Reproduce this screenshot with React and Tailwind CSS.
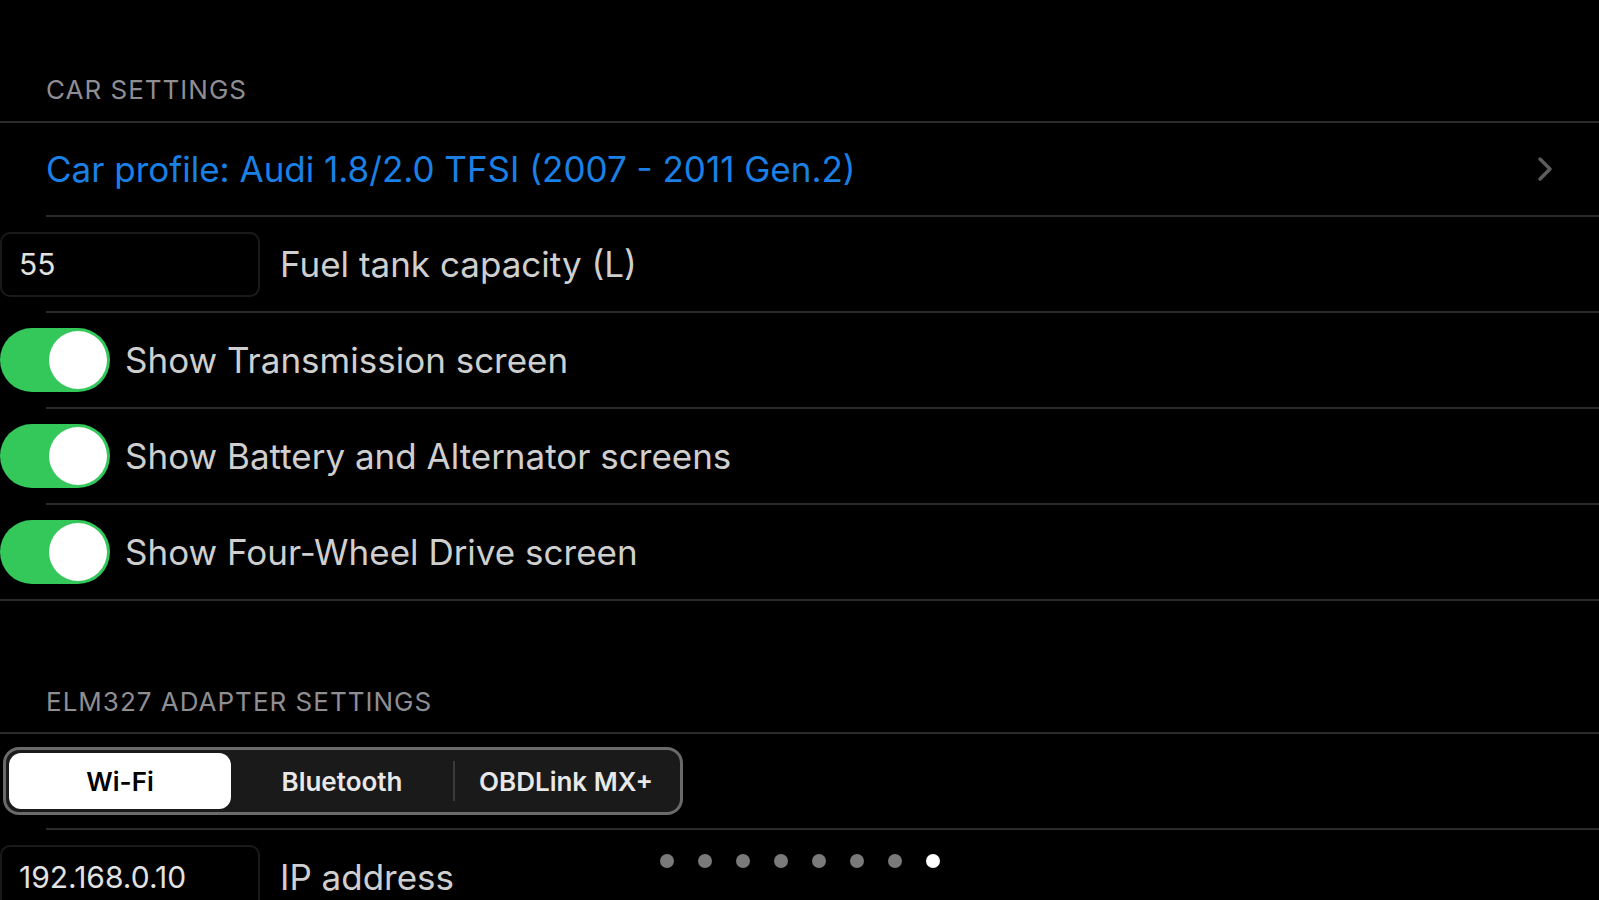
import React from "react";

const font = { fontFamily: "Inter, 'Noto Sans', sans-serif" };

function Sep({ inset }) {
  return <div className={`h-[2px] bg-[#2a2a2a] ${inset ? "ml-[46px]" : ""}`} />;
}

function Toggle() {
  return (
    <div className="relative h-[64px] w-[110px] shrink-0 rounded-full bg-[#34c759]">
      <div className="absolute right-[3px] top-[3px] h-[58px] w-[58px] rounded-full bg-white" />
    </div>
  );
}

function ToggleRow({ label }) {
  return (
    <div className="flex h-[94px] items-center gap-[15px]">
      <Toggle />
      <span className="text-[35px] text-[#cfcfcf]">{label}</span>
    </div>
  );
}

function InputRow({ value, label }) {
  return (
    <div className="flex h-[94px] items-center">
      <div className="flex h-[65px] w-[260px] items-center rounded-[10px] border-2 border-[#1a1a1a] pl-[17px] text-[30px] text-[#e2e2e2]">
        {value}
      </div>
      <span className="ml-[20px] text-[35px] text-[#cfcfcf]">{label}</span>
    </div>
  );
}

export default function App() {
  return (
    <div className="relative h-[900px] w-[1599px] overflow-hidden bg-black" style={font}>
      <div className="pl-[46px] pt-[76px] pb-[17px] text-[26px] leading-[28px] tracking-[1px] text-[#8e8e93]">
        CAR SETTINGS
      </div>
      <Sep />
      <div className="flex h-[92px] items-center justify-between pl-[46px] pr-[46px]">
        <span className="text-[35px] text-[#1a80e5]">Car profile: Audi 1.8/2.0 TFSI (2007 - 2011 Gen.2)</span>
        <svg width="16" height="26" viewBox="0 0 16 26" fill="none">
          <polyline points="3,3 13,13 3,23" stroke="#5c5c5c" strokeWidth="3.5" strokeLinecap="round" strokeLinejoin="round" />
        </svg>
      </div>
      <Sep inset />
      <InputRow value="55" label="Fuel tank capacity (L)" />
      <Sep inset />
      <ToggleRow label="Show Transmission screen" />
      <Sep inset />
      <ToggleRow label="Show Battery and Alternator screens" />
      <Sep inset />
      <ToggleRow label="Show Four-Wheel Drive screen" />
      <Sep />
      <div className="pl-[46px] pt-[87px] pb-[16px] text-[26px] leading-[28px] tracking-[1px] text-[#8e8e93]">
        ELM327 ADAPTER SETTINGS
      </div>
      <Sep />
      <div className="flex h-[94px] items-center pl-[3px]">
        <div className="flex h-[68px] w-[680px] items-stretch rounded-[16px] border-[3px] border-[#6a6a6a] bg-[#1a1a1a] p-[3px]">
          <div className="flex flex-1 items-center justify-center rounded-[12px] bg-white text-[26px] font-semibold text-black">
            Wi-Fi
          </div>
          <div className="flex flex-1 items-center justify-center text-[26px] font-semibold text-[#e8e8e8]">
            Bluetooth
          </div>
          <div className="my-[8px] w-[2px] bg-[#3a3a3a]" />
          <div className="flex flex-1 items-center justify-center text-[26px] font-semibold text-[#e8e8e8]">
            OBDLink MX+
          </div>
        </div>
      </div>
      <Sep inset />
      <InputRow value="192.168.0.10" label="IP address" />

      <div className="absolute left-1/2 top-[854px] flex -translate-x-1/2 gap-[24px]">
        {[0, 1, 2, 3, 4, 5, 6].map((i) => (
          <div key={i} className="h-[14px] w-[14px] rounded-full bg-[#7a7a7a]" />
        ))}
        <div className="h-[14px] w-[14px] rounded-full bg-white" />
      </div>
    </div>
  );
}
